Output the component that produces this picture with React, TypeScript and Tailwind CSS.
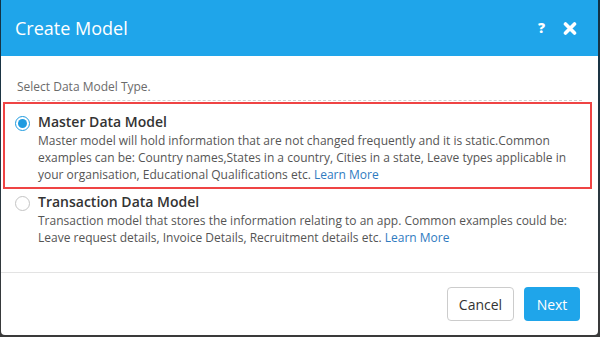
import React from "react";

function Radio({ checked }: { checked: boolean }) {
  return checked ? (
    <span className="mt-[4px] flex h-[15px] w-[15px] shrink-0 items-center justify-center rounded-full border border-[#1e9be0] bg-white">
      <span className="h-[9px] w-[9px] rounded-full bg-[#1e9be0]" />
    </span>
  ) : (
    <span className="mt-[4px] h-[15px] w-[15px] shrink-0 rounded-full border border-[#c4c4c4] bg-white" />
  );
}

export default function App() {
  return (
    <div className="h-[337px] w-[600px] bg-gradient-to-b from-[#0f3246] to-[#3a3a3a] font-['Open_Sans',sans-serif]">
      <div className="ml-px flex h-[335px] w-[597px] flex-col overflow-hidden rounded-b-[4px] bg-white">
        <div className="flex h-[56px] shrink-0 items-center justify-between bg-[#1fa5ea] pl-[14px] pr-[21px]">
          <span className="text-[18px] leading-[27px] text-white">Create Model</span>
          <div className="flex items-center gap-[18px]">
            <span className="text-[14px] font-extrabold leading-none text-white">?</span>
            <svg width="14" height="13" viewBox="0 0 14 13">
              <path d="M2.5 2 L11.5 11 M11.5 2 L2.5 11" stroke="white" strokeWidth="3.6" strokeLinecap="round" />
            </svg>
          </div>
        </div>
        <div className="flex-1 pt-[22px]">
          <div className="mx-4 border-b border-dashed border-[#cfcfcf] pb-[4px] text-[12px] leading-[18px] text-[#6b6b6b]">
            Select Data Model Type.
          </div>
          <div className="ml-[2px] mr-[6px] mt-px flex gap-2 border-2 border-[#ef4444] pb-[4px] pl-[10px] pr-[15px] pt-[8px]">
            <Radio checked />
            <div>
              <div className="text-[14px] font-semibold leading-[20px] text-[#333]">Master Data Model</div>
              <div className="text-[12px] leading-[17px] text-[#555]">
                Master model will hold information that are not changed frequently and it is static.Common examples can be: Country names,States in a country, Cities in a state, Leave types applicable in your organisation, Educational Qualifications etc.{" "}
                <span className="text-[#2f7bbf]">Learn More</span>
              </div>
            </div>
          </div>
          <div className="ml-[2px] mr-[6px] mt-[3px] flex gap-2 pl-[12px] pr-[17px]">
            <Radio checked={false} />
            <div>
              <div className="text-[14px] font-semibold leading-[20px] text-[#333]">Transaction Data Model</div>
              <div className="text-[12px] leading-[17px] text-[#555]">
                Transaction model that stores the information relating to an app. Common examples could be: Leave request details, Invoice Details, Recruitment details etc.{" "}
                <span className="text-[#2f7bbf]">Learn More</span>
              </div>
            </div>
          </div>
        </div>
        <div className="flex h-[63px] shrink-0 items-start justify-end gap-[10px] border-t border-[#e3e3e3] pr-[18px] pt-[14px]">
          <button className="h-[34px] w-[67px] rounded-[4px] border border-[#cccccc] bg-white text-[14px] text-[#333]">Cancel</button>
          <button className="h-[34px] w-[56px] rounded-[4px] bg-[#1fa5ea] text-[14px] text-white">Next</button>
        </div>
      </div>
    </div>
  );
}
